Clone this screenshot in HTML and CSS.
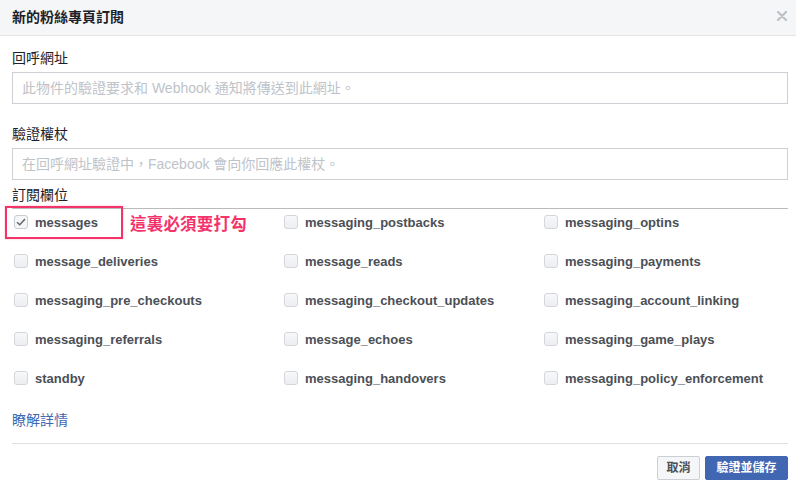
FILE: index.html
```html
<!DOCTYPE html>
<html lang="zh-Hant">
<head>
<meta charset="utf-8">
<link rel="stylesheet" href="styles.css">
</head>
<body>
<div class="dialog">
  <div class="header">
    <span class="title">新的粉絲專頁訂閱</span>
    <svg class="close" width="10" height="10" viewBox="0 0 10 10"><path d="M1 1L9 9M9 1L1 9" stroke="#bec3c9" stroke-width="2.4" stroke-linecap="round"/></svg>
  </div>
  <div class="content">
    <div class="label label-first">回呼網址</div>
    <div class="input">此物件的驗證要求和 Webhook 通知將傳送到此網址。</div>
    <div class="label label-second">驗證權杖</div>
    <div class="input">在回呼網址驗證中，Facebook 會向你回應此權杖。</div>
    <div class="label label-third">訂閱欄位</div>
    <div class="fields">
      <div class="annot-box"></div>
      <div class="annot-text">這裏必須要打勾</div>
      <label class="field"><span class="cb checked"><svg width="10" height="8" viewBox="0 0 10 8"><path d="M1 4.2L3.8 6.8L9 1" fill="none" stroke="#606770" stroke-width="1.5"/></svg></span>messages</label>
      <label class="field"><span class="cb"></span>messaging_postbacks</label>
      <label class="field"><span class="cb"></span>messaging_optins</label>
      <label class="field"><span class="cb"></span>message_deliveries</label>
      <label class="field"><span class="cb"></span>message_reads</label>
      <label class="field"><span class="cb"></span>messaging_payments</label>
      <label class="field"><span class="cb"></span>messaging_pre_checkouts</label>
      <label class="field"><span class="cb"></span>messaging_checkout_updates</label>
      <label class="field"><span class="cb"></span>messaging_account_linking</label>
      <label class="field"><span class="cb"></span>messaging_referrals</label>
      <label class="field"><span class="cb"></span>message_echoes</label>
      <label class="field"><span class="cb"></span>messaging_game_plays</label>
      <label class="field"><span class="cb"></span>standby</label>
      <label class="field"><span class="cb"></span>messaging_handovers</label>
      <label class="field"><span class="cb"></span>messaging_policy_enforcement</label>
    </div>
    <a class="more" href="#">瞭解詳情</a>
    <div class="footer">
      <button class="btn btn-cancel">取消</button>
      <button class="btn btn-primary">驗證並儲存</button>
    </div>
  </div>
</div>
</body>
</html>
```
FILE: styles.css
```css
html, body {
  margin: 0;
  padding: 0;
  background: #ffffff;
}
body {
  font-family: "Liberation Sans", "Noto Sans CJK TC", sans-serif;
  color: #1d2129;
  width: 796px;
  height: 491px;
  overflow: hidden;
}
.header {
  height: 35px;
  background: #f5f6f7;
  border-bottom: 1px solid #e5e5e5;
  display: flex;
  align-items: center;
  justify-content: space-between;
  padding: 0 9px 0 12px;
}
.title {
  font-size: 14px;
  font-weight: bold;
  line-height: 18px;
  color: #1d2129;
  margin-top: -2px;
}
.close {
  display: block;
  margin-top: -3px;
}
.content {
  padding: 0 8px 0 12px;
}
.label {
  font-size: 14px;
  line-height: 18px;
  color: #1d2129;
}
.label-first { margin-top: 13px; margin-bottom: 5px; }
.label-second { margin-top: 21px; margin-bottom: 5px; }
.label-third { margin-top: 6px; margin-bottom: 4px; }
.input {
  height: 30px;
  border: 1px solid #ccd0d5;
  box-sizing: content-box;
  padding: 0 9px;
  font-size: 14px;
  line-height: 30px;
  color: #bec3c9;
  white-space: nowrap;
}
.fields {
  position: relative;
  border-top: 1px solid #bbbbbb;
  display: grid;
  grid-template-columns: 270px 260px 1fr;
  grid-auto-rows: 26px;
  row-gap: 13px;
}
.field {
  display: flex;
  align-items: center;
  padding-left: 2px;
  font-size: 13px;
  font-weight: bold;
  color: #4b4f56;
  white-space: nowrap;
}
.cb {
  width: 12px;
  height: 12px;
  border: 1px solid #d3d6db;
  border-radius: 3px;
  background: linear-gradient(#f7f8fa, #eceef1);
  margin-right: 7px;
  display: flex;
  align-items: center;
  justify-content: center;
  flex: none;
}
.cb.checked {
  background: #f5f6f7;
  border-color: #c9ccd1;
}
.annot-box {
  position: absolute;
  left: -7px;
  top: -3px;
  width: 114px;
  height: 29px;
  border: 2px solid #f4336b;
  box-shadow: 0 0 2px rgba(244, 51, 107, 0.35);
  background: transparent;
  z-index: 1;
}
.annot-text {
  position: absolute;
  left: 118px;
  top: 5px;
  font-size: 16.5px;
  line-height: 20px;
  font-weight: bold;
  color: #f4336b;
  letter-spacing: 0.2px;
  text-shadow: 0 0 2px #ffffff, 0 0 2px #ffffff;
  z-index: 1;
}
.more {
  display: block;
  margin-top: 20px;
  font-size: 14px;
  line-height: 18px;
  color: #4267b2;
  text-decoration: none;
  width: max-content;
}
.footer {
  margin-top: 14px;
  border-top: 1px solid #dddfe2;
  padding-top: 12px;
  display: flex;
  justify-content: flex-end;
  gap: 5px;
}
.btn {
  height: 24px;
  font-family: "Liberation Sans", "Noto Sans CJK TC", sans-serif;
  font-size: 12px;
  font-weight: bold;
  line-height: 22px;
  padding: 0 8px;
  border-radius: 2px;
  margin: 0;
  box-sizing: border-box;
}
.btn-cancel {
  background: #f5f6f7;
  border: 1px solid #ccd0d5;
  color: #4b4f56;
  width: 43px;
}
.btn-primary {
  background: #4267b2;
  border: 1px solid #4267b2;
  color: #ffffff;
  width: 83px;
}
```
